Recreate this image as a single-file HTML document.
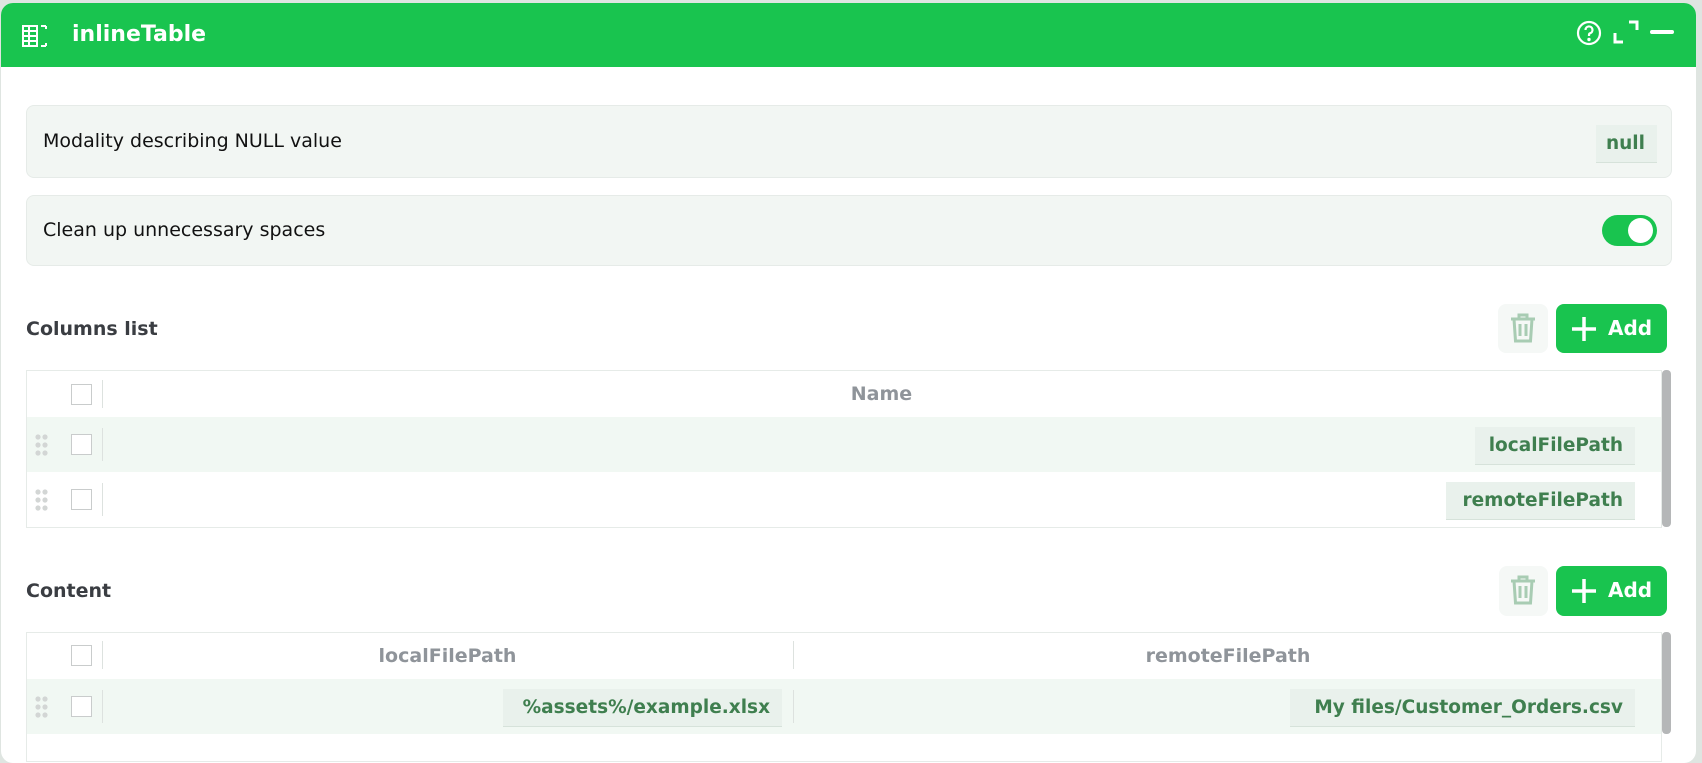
<!DOCTYPE html>
<html><head><meta charset="utf-8"><style>
*{margin:0;padding:0;box-sizing:border-box}
body{width:1702px;height:745px;background:#dfe5e1;font-family:"DejaVu Sans","Liberation Sans",sans-serif;position:relative;overflow:hidden}
.a{position:absolute;white-space:nowrap}
.card{left:1px;top:3px;width:1695px;height:760px;background:#fff;border-radius:12px;overflow:hidden}
.hdr{left:0;top:0;width:1695px;height:64px;background:#19c44f}
.box{background:#f2f6f3;border:1px solid #e6ebe8;border-radius:8px}
.lbl{font-size:19px;color:#111}
.badge{background:#e9f1ec;border-bottom:1px solid #d6e2da;color:#3f7f4f;font-weight:bold;font-size:18.5px;text-align:right;padding-right:12px;line-height:37px}
.sec{font-size:19px;font-weight:bold;color:#3a3d42}
.tbl{border:1px solid #e6ebe8;background:#fff}
.cb{width:21px;height:21px;border:1px solid #c9cccc;background:#fff}
.sep{width:1px;background:#dde2df}
.th{font-size:19px;font-weight:bold;color:#8f949a;text-align:center}
.grn{background:#f1f8f3}
.btn{background:#19c44f;border-radius:8px;color:#fff;font-weight:bold;font-size:21px}
.tr{background:#f5f8f6;border-radius:8px}
.sb{width:9px;background:#b5b7b8;border-radius:4px}
</style></head><body>
<div class="a card">
 <div class="a hdr"></div>
</div>
<svg class="a" style="left:22px;top:25px" width="28" height="22" viewBox="0 0 28 22" fill="none" stroke="#fff" stroke-width="2">
<path d="M1 1h14v20H1zM1 6h14M1 11h14M1 16h14M7 1v20M19 1h5M19 21h5M24 1v3M24 18v3"/></svg>
<div class="a" style="left:72px;top:22px;font-size:22px;font-weight:bold;color:#fff">inlineTable</div>
<svg class="a" style="left:1575px;top:19px" width="28" height="28" viewBox="0 0 28 28" fill="none" stroke="#fff" stroke-width="2.2">
<circle cx="14" cy="14" r="11"/><path d="M10.5 11a3.5 3.5 0 1 1 4.5 3.3c-.8.3-1 .9-1 1.7v1"/><circle cx="14" cy="20.5" r=".6" fill="#fff"/></svg>
<svg class="a" style="left:1613px;top:20px" width="26" height="24" viewBox="0 0 26 24" fill="none" stroke="#fff" stroke-width="3">
<path d="M2 13v9h8M16 2h8v8"/></svg>
<div class="a" style="left:1650px;top:30px;width:24px;height:4px;background:#fff;border-radius:2px"></div>

<div class="a box" style="left:26px;top:105px;width:1646px;height:73px"></div>
<div class="a lbl" style="left:43px;top:130px">Modality describing NULL value</div>
<div class="a badge" style="left:1596px;top:125px;width:61px">null</div>

<div class="a box" style="left:26px;top:195px;width:1646px;height:71px"></div>
<div class="a lbl" style="left:43px;top:219px">Clean up unnecessary spaces</div>
<div class="a" style="left:1602px;top:215px;width:55px;height:31px;background:#19c44f;border-radius:16px"></div>
<div class="a" style="left:1628px;top:218px;width:25px;height:25px;background:#fff;border-radius:50%"></div>

<div class="a sec" style="left:26px;top:318px">Columns list</div>
<div class="a tr" style="left:1498px;top:304px;width:50px;height:49px"></div>
<svg class="a" style="left:1509px;top:312px" width="28" height="32" viewBox="0 0 28 32" fill="none" stroke="#a8ccb3" stroke-width="3">
<path d="M2 7h24M10 7V3h8v4M5 7l1.5 22h15L23 7M11 12v12M17 12v12"/></svg>
<div class="a btn" style="left:1556px;top:304px;width:111px;height:49px"></div>
<svg class="a" style="left:1571px;top:316px" width="26" height="26" viewBox="0 0 26 26" stroke="#fff" stroke-width="3.5"><path d="M13 1v24M1 13h24"/></svg>
<div class="a" style="left:1608px;top:316px;font-size:20px;font-weight:bold;color:#fff">Add</div>

<div class="a tbl" style="left:26px;top:370px;width:1636px;height:158px"></div>
<div class="a grn" style="left:27px;top:417px;width:1634px;height:55px"></div>
<div class="a cb" style="left:71px;top:384px"></div><div class="a sep" style="left:102px;top:380px;height:28px"></div>
<div class="a th" style="left:102px;top:383px;width:1559px">Name</div>
<div class="a cb" style="left:71px;top:434px"></div><div class="a sep" style="left:102px;top:428px;height:33px"></div>
<div class="a cb" style="left:71px;top:489px"></div><div class="a sep" style="left:102px;top:483px;height:33px"></div>
<svg class="a" style="left:35px;top:434px" width="14" height="22" fill="#d3d6d5"><circle cx="3" cy="3" r="2.6"/><circle cx="10" cy="3" r="2.6"/><circle cx="3" cy="11" r="2.6"/><circle cx="10" cy="11" r="2.6"/><circle cx="3" cy="19" r="2.6"/><circle cx="10" cy="19" r="2.6"/></svg>
<svg class="a" style="left:35px;top:489px" width="14" height="22" fill="#d3d6d5"><circle cx="3" cy="3" r="2.6"/><circle cx="10" cy="3" r="2.6"/><circle cx="3" cy="11" r="2.6"/><circle cx="10" cy="11" r="2.6"/><circle cx="3" cy="19" r="2.6"/><circle cx="10" cy="19" r="2.6"/></svg>
<div class="a badge" style="left:1475px;top:427px;width:160px">localFilePath</div>
<div class="a badge" style="left:1446px;top:482px;width:189px">remoteFilePath</div>
<div class="a sb" style="left:1662px;top:370px;height:157px"></div>

<div class="a sec" style="left:26px;top:580px">Content</div>
<div class="a tr" style="left:1499px;top:566px;width:49px;height:50px"></div>
<svg class="a" style="left:1509px;top:574px" width="28" height="32" viewBox="0 0 28 32" fill="none" stroke="#a8ccb3" stroke-width="3">
<path d="M2 7h24M10 7V3h8v4M5 7l1.5 22h15L23 7M11 12v12M17 12v12"/></svg>
<div class="a btn" style="left:1556px;top:566px;width:111px;height:50px"></div>
<svg class="a" style="left:1571px;top:578px" width="26" height="26" viewBox="0 0 26 26" stroke="#fff" stroke-width="3.5"><path d="M13 1v24M1 13h24"/></svg>
<div class="a" style="left:1608px;top:578px;font-size:20px;font-weight:bold;color:#fff">Add</div>

<div class="a tbl" style="left:26px;top:632px;width:1636px;height:130px"></div>
<div class="a grn" style="left:27px;top:679px;width:1634px;height:55px"></div>
<div class="a cb" style="left:71px;top:645px"></div><div class="a sep" style="left:102px;top:641px;height:28px"></div>
<div class="a th" style="left:102px;top:645px;width:691px">localFilePath</div>
<div class="a sep" style="left:793px;top:641px;height:28px"></div>
<div class="a th" style="left:794px;top:645px;width:868px">remoteFilePath</div>
<div class="a cb" style="left:71px;top:696px"></div><div class="a sep" style="left:102px;top:690px;height:33px"></div>
<div class="a sep" style="left:793px;top:690px;height:33px"></div>
<svg class="a" style="left:35px;top:696px" width="14" height="22" fill="#d3d6d5"><circle cx="3" cy="3" r="2.6"/><circle cx="10" cy="3" r="2.6"/><circle cx="3" cy="11" r="2.6"/><circle cx="10" cy="11" r="2.6"/><circle cx="3" cy="19" r="2.6"/><circle cx="10" cy="19" r="2.6"/></svg>
<div class="a badge" style="left:503px;top:689px;width:279px">%assets%/example.xlsx</div>
<div class="a badge" style="left:1290px;top:689px;width:345px">My files/Customer_Orders.csv</div>
<div class="a sb" style="left:1662px;top:632px;height:102px"></div>
</body></html>
